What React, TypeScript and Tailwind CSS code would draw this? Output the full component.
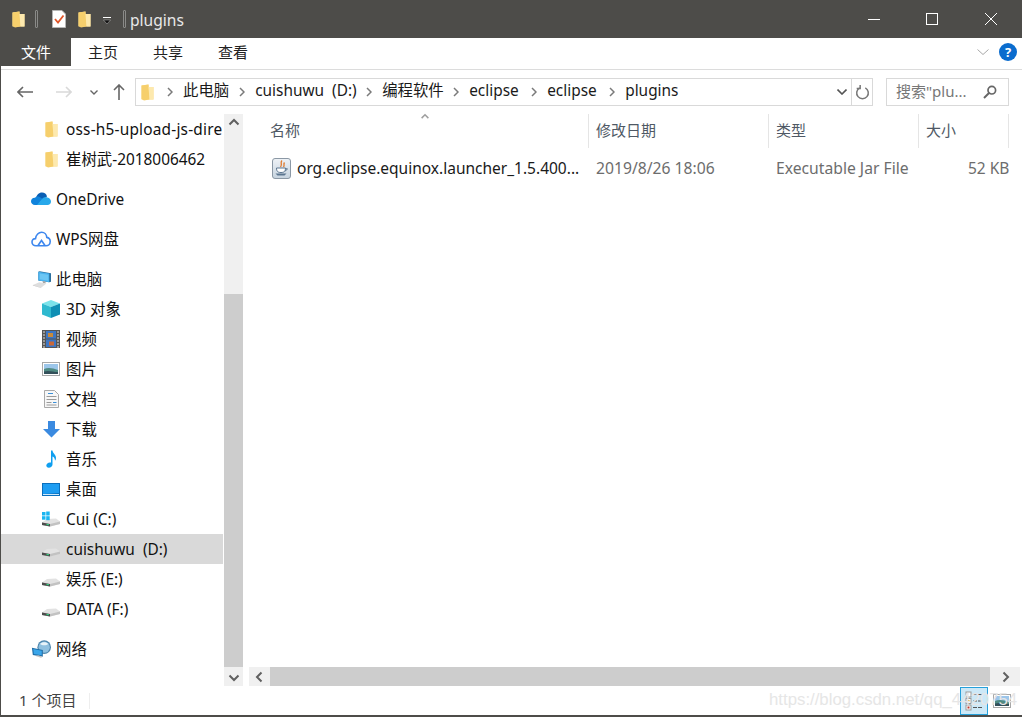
import React from "react";

const font = "font-['Noto_Sans','Noto_Sans_CJK_SC',sans-serif]";

const FolderIcon = ({ className = "" }: { className?: string }) => (
  <svg viewBox="0 0 13 17" className={`w-[13px] h-[17px] ${className}`}>
    <path d="M0.5 1.5 L7.5 0.5 L7.5 3 L12.5 3 L12.5 15.5 L0.5 15.5 Z" fill="#fbdc8c" />
    <path d="M0.5 1.5 L7.5 0.5 L8.5 15.5 L3 16.5 L0.5 15 Z" fill="#f6cf6c" />
    <path d="M7.5 3 L12.5 3 L12.5 15.5 L8.5 15.5 Z" fill="#fde9ae" />
  </svg>
);

const DriveIcon = ({ win = false }: { win?: boolean }) => (
  <svg viewBox="0 0 20 20" className="w-5 h-5">
    <path d="M1 13.5 L6 10 L15 9.5 L19 12.5 L19 15 L9 17.5 L1 16 Z" fill="#e2e2e2" />
    <path d="M1 13.5 L9 15 L19 12.5 L19 15 L9 17.5 L1 16 Z" fill="#c2c2c2" />
    <path d="M1 13.5 L9 15 L9 17.5 L1 16 Z" fill="#4c4c4c" />
    <rect x="5.5" y="15" width="2.4" height="1.2" fill="#35d07f" />
    {win && (
      <g fill="#19b5f1">
        <rect x="1" y="3" width="3.5" height="3.5" />
        <rect x="5.2" y="2.5" width="3.5" height="4" />
        <rect x="1" y="7.2" width="3.5" height="3.5" />
        <rect x="5.2" y="7.2" width="3.5" height="4" />
      </g>
    )}
  </svg>
);

const OneDriveIcon = () => (
  <svg viewBox="0 0 20 14" className="w-5 h-[14px]">
    <path d="M5 7 C5 3 8 0.5 11 0.5 C13.5 0.5 15.5 2 16 4.5 L9 9 Z" fill="#0a5fb4" />
    <path d="M4 13 C1.5 13 0 11.3 0 9.3 C0 7.2 1.7 5.6 4 5.8 C5 4.6 7 4.2 8.6 5 L12 7 L7 13 Z" fill="#1083dc" />
    <path d="M6 13 L11 7 C12.5 5 15 4.3 16.5 5.5 C18.5 6 20 7.5 20 9.6 C20 11.6 18.5 13 16.5 13 Z" fill="#28a8ea" />
  </svg>
);

const CloudIcon = () => (
  <svg viewBox="0 0 20 16" className="w-5 h-4" fill="none" stroke="#3d87ee" strokeWidth="1.6">
    <path d="M5 14.8 C2.5 14.8 1 13 1 11 C1 8.8 2.7 7.5 4.5 7.6 C5 4 7.7 1.2 10.6 1.2 C13.6 1.2 15.6 3.6 15.8 6.4 C17.8 6.8 19.2 8.4 19.2 10.5 C19.2 13 17.3 14.8 15 14.8 Z" />
    <path d="M7 14.5 L10.5 9.5 L14 14.5" />
  </svg>
);

const PcIcon = () => (
  <svg viewBox="0 0 21 19" className="w-[21px] h-[19px] ml-px">
    <path d="M7 1 L8.5 0.5 L21 2.5 L21 12 L19 12.5 L7 10.5 Z" fill="#2b6f9e" />
    <path d="M7 1 L19 3 L19 12.5 L7 10.5 Z" fill="#4ab2ee" />
    <path d="M8.5 2.8 L18 4.3 L18 11 L8.5 9.3 Z" fill="#6cc6f4" />
    <path d="M12 11.2 L15 11.8 L15 14 L12 13.5 Z" fill="#a6a6a6" />
    <path d="M1 15.5 L8 12.5 L16 14 L10 18.5 Z" fill="#dedede" />
    <path d="M1 15.5 L10 18.5 L10 19 L1 16.2 Z" fill="#b5b5b5" />
  </svg>
);

const CubeIcon = () => (
  <svg viewBox="0 0 18 18" className="w-[18px] h-[18px]">
    <path d="M9 0 L18 3.5 L9 7 L0 3.5 Z" fill="#7be3ea" />
    <path d="M0 3.5 L9 7 L9 18 L0 14.5 Z" fill="#2fb9cf" />
    <path d="M18 3.5 L9 7 L9 18 L18 14.5 Z" fill="#0f8fb4" />
  </svg>
);

const VideoIcon = () => (
  <svg viewBox="0 0 18 18" className="w-[18px] h-[18px]">
    <rect width="18" height="18" fill="#555" />
    <rect x="4" y="1" width="10" height="7.5" fill="#3d76c4" />
    <rect x="4" y="9.5" width="10" height="7.5" fill="#3d76c4" />
    <rect x="6" y="3" width="5" height="4" fill="#c98a3a" />
    <rect x="7" y="11.5" width="5" height="4" fill="#c9683a" />
    <path d="M1 2h2M1 5h2M1 8h2M1 11h2M1 14h2M1 17h2M15 2h2M15 5h2M15 8h2M15 11h2M15 14h2M15 17h2" stroke="#ddd" strokeWidth="1" />
  </svg>
);

const PictureIcon = ({ className = "w-[18px] h-[14px]" }: { className?: string }) => (
  <svg viewBox="0 0 18 14" className={className}>
    <rect x="0.5" y="0.5" width="17" height="13" fill="#fff" stroke="#a8a8a8" />
    <rect x="2" y="2" width="14" height="10" fill="#9cc6ea" />
    <path d="M2 7 C6 5 11 6 16 8 L16 12 L2 12 Z" fill="#4f8a82" />
    <path d="M2 9.5 C7 8 11 10 16 10 L16 12 L2 12 Z" fill="#33505a" />
  </svg>
);

const DocIcon = () => (
  <svg viewBox="0 0 15 18" className="w-[15px] h-[18px]">
    <path d="M0.5 0.5 L10.5 0.5 L14.5 4.5 L14.5 17.5 L0.5 17.5 Z" fill="#f7f7f7" stroke="#a9a9a9" />
    <path d="M4 3.5h5" stroke="#3a8fd8" />
    <path d="M2.5 6.5h10M2.5 9.5h10M2.5 12.5h5M2.5 15h10" stroke="#9a9a9a" />
    <path d="M9 12.5h3.5" stroke="#3a8fd8" />
  </svg>
);

const DownloadIcon = () => (
  <svg viewBox="0 0 17 17" className="w-[17px] h-[17px]">
    <path d="M5 0 L12 0 L12 8 L17 8 L8.5 16.5 L0 8 L5 8 Z" fill="#3a8ae0" />
  </svg>
);

const MusicIcon = () => (
  <svg viewBox="0 0 11 18" className="w-[11px] h-[18px]">
    <path d="M5 0.5 L6.5 0.5 C6.8 3.5 10 4.5 10 8 C10 9 9.7 10 9 10.8 C9 8.5 8 7 6.5 6.5 L6.5 14.5 C6.5 16.3 4.8 17.8 2.8 17.8 C1.2 17.8 0.3 16.8 0.3 15.6 C0.3 13.8 2 12.4 3.8 12.4 C4.2 12.4 4.6 12.5 5 12.6 Z" fill="#0f9ff0" />
  </svg>
);

const DesktopIcon = () => (
  <svg viewBox="0 0 18 13" className="w-[18px] h-[13px]">
    <rect width="18" height="13" fill="#0a6fbd" />
    <path d="M1 1 L17 1 L17 10 L1 11 Z" fill="#1e9df2" />
    <rect x="1" y="11" width="16" height="1" fill="#cfe9fb" />
  </svg>
);

const NetworkIcon = () => (
  <svg viewBox="0 0 22 20" className="w-[22px] h-5">
    <circle cx="14.5" cy="8" r="7.5" fill="#4d86ad" />
    <circle cx="14.5" cy="8" r="6.2" fill="#8fc0df" />
    <path d="M10 4.5 C12 2 17 2 19 4.5 C17 6.5 12 6.5 10 4.5 Z" fill="#e8f3f9" />
    <path d="M1 8.5 L13 11 L13 18.5 L2 16.5 Z" fill="#1f6ea8" />
    <path d="M2.5 10 L11.8 12 L11.8 17 L3.2 15.4 Z" fill="#3aa6ea" />
    <path d="M5 17.8 L11 19.5 L13 18.5 L8 17 Z" fill="#c4c4c4" />
  </svg>
);

const JarIcon = () => (
  <svg viewBox="0 0 19 21" className="w-[19px] h-[21px]">
    <defs>
      <linearGradient id="jarBg" x1="0" y1="0" x2="0" y2="1">
        <stop offset="0" stopColor="#eef2f6" />
        <stop offset="1" stopColor="#c6d3df" />
      </linearGradient>
    </defs>
    <rect x="0.5" y="0.5" width="18" height="20" rx="2.5" fill="url(#jarBg)" stroke="#8b98a5" />
    <path d="M10 2.5 C7.5 5 11 6 8.5 9 M12.5 4.5 C11 6.5 13 7 11.5 9" stroke="#e0782a" strokeWidth="1.3" fill="none" />
    <path d="M4.5 10 L13.5 10 C13.5 13 12.5 14.5 9 14.5 C5.5 14.5 4.5 13 4.5 10 Z" fill="#fff" stroke="#5c7690" />
    <path d="M13.5 10.5 L15.5 11 L13 13.2" fill="none" stroke="#5c7690" />
    <path d="M3.5 15.5 L14.5 15.5 L12.5 17.5 L5.5 17.5 Z" fill="#5c7690" />
  </svg>
);

const Chevron = ({ dir, className = "" }: { dir: "up" | "down" | "left" | "right"; className?: string }) => {
  const d = {
    up: "M1.5 7.5 L6 3 L10.5 7.5",
    down: "M1.5 4.5 L6 9 L10.5 4.5",
    left: "M7.5 1.5 L3 6 L7.5 10.5",
    right: "M4.5 1.5 L9 6 L4.5 10.5",
  }[dir];
  return (
    <svg viewBox="0 0 12 12" className={`w-3 h-3 ${className}`} fill="none" stroke="#606060" strokeWidth="2">
      <path d={d} />
    </svg>
  );
};

const Crumb = ({ text, width = "" }: { text: string; width?: string }) => (
  <>
    <svg viewBox="0 0 6 10" className="w-[6px] h-[10px] shrink-0" fill="none" stroke="#7a7a7a" strokeWidth="1.5">
      <path d="M1 1 L5 5 L1 9" />
    </svg>
    <span className={`whitespace-pre text-[15.4px] text-[#1a1a1a] leading-none pb-[3px] ${width}`}>{text}</span>
  </>
);

const NavRow = ({
  icon,
  label,
  level = 2,
  selected = false,
  className = "",
}: {
  icon: React.ReactNode;
  label: string;
  level?: 1 | 2;
  selected?: boolean;
  className?: string;
}) => (
  <div
    className={`h-[30px] flex items-center gap-[5px] text-[15.4px] text-[#111] whitespace-pre overflow-hidden ${
      level === 1 ? "pl-[30px]" : "pl-[40px]"
    } ${selected ? "bg-[#d9d9d9]" : ""} ${className}`}
  >
    <span className="w-5 h-5 flex items-center justify-center shrink-0">{icon}</span>
    <span className="pt-px">{label}</span>
  </div>
);

const Column = ({ label, width }: { label: string; width: string }) => (
  <div className={`${width} h-[34px] pl-[7px] pb-[2px] flex items-center border-r border-[#e5e5e5] text-[15px] text-[#4f5965] shrink-0`}>
    {label}
  </div>
);

export default function App() {
  return (
    <div className={`${font} relative w-[1022px] h-[717px] flex flex-col bg-white border-l border-b-2 border-[#4d4c49] overflow-hidden`}>
      {/* title bar */}
      <div className="h-[38px] bg-[#4d4c49] flex items-center shrink-0 text-[#e8e8e8]">
        <FolderIcon className="ml-[11px]" />
        <div className="ml-[10px] w-[3px] h-[18px] border border-[#8a8a88] rounded-[1px]" />
        <svg viewBox="0 0 14 18" className="ml-[14px] w-[14px] h-[18px]">
          <path d="M0.5 0.5 L10 0.5 L13.5 4 L13.5 17.5 L0.5 17.5 Z" fill="#fff" stroke="#b5b5b5" />
          <path d="M3 9 L6 12.5 L11.5 5.5" fill="none" stroke="#e0562a" strokeWidth="1.8" />
        </svg>
        <FolderIcon className="ml-[12px]" />
        <svg viewBox="0 0 8 7" className="ml-[12px] mt-[3px] w-2 h-[7px]">
          <path d="M0 0h8v1H0z" fill="#fff" />
          <path d="M0.5 3h7L4 7z" fill="#111" stroke="#ddd" strokeWidth="0.4" />
        </svg>
        <div className="ml-[12px] w-[3px] h-[18px] border border-[#8a8a88] rounded-[1px]" />
        <span className="ml-[4px] pt-[3px] text-[15.6px] leading-none">plugins</span>
        <svg viewBox="0 0 12 1" className="ml-auto w-3 h-px">
          <rect width="12" height="1" fill="#fff" />
        </svg>
        <div className="ml-[46px] w-3 h-3 border border-white" />
        <svg viewBox="0 0 12 12" className="ml-[47px] mr-[25px] w-3 h-3" fill="none" stroke="#fff" strokeWidth="1">
          <path d="M0 0 L12 12 M12 0 L0 12" />
        </svg>
      </div>

      {/* ribbon tabs */}
      <div className="h-[32px] flex border-b border-[#dcdcdc] shrink-0 text-[15px] text-[#222]">
        <div className="w-[70px] h-[28px] bg-[#4d4c49] text-white flex items-center justify-center">文件</div>
        <div className="h-[28px] flex items-center gap-[35px] pl-[17px]">
          <span>主页</span>
          <span>共享</span>
          <span>查看</span>
        </div>
        <div className="ml-auto h-[28px] flex items-center gap-[10px] pr-[5px]">
          <svg viewBox="0 0 12 6" className="w-3 h-[6px]" fill="none" stroke="#a8a8a8">
            <path d="M0.5 0.5 L6 5.5 L11.5 0.5" />
          </svg>
          <div className="w-[18px] h-[18px] rounded-full bg-[#0a6cce] text-white text-[13px] font-bold flex items-center justify-center leading-none">?</div>
        </div>
      </div>

      {/* nav toolbar */}
      <div className="h-[44px] flex items-center shrink-0">
        <svg viewBox="0 0 16 12" className="ml-[16px] w-4 h-3" fill="none" stroke="#666" strokeWidth="1.6">
          <path d="M16 6 L1 6 M6 1 L1 6 L6 11" />
        </svg>
        <svg viewBox="0 0 16 12" className="ml-[23px] w-4 h-3" fill="none" stroke="#d9d9d9" strokeWidth="1.6">
          <path d="M0 6 L15 6 M10 1 L15 6 L10 11" />
        </svg>
        <svg viewBox="0 0 8 5" className="ml-[18px] w-2 h-[5px]" fill="none" stroke="#666" strokeWidth="1.4">
          <path d="M0.5 0.5 L4 4 L7.5 0.5" />
        </svg>
        <svg viewBox="0 0 12 16" className="ml-[15px] w-3 h-4" fill="none" stroke="#666" strokeWidth="1.6">
          <path d="M6 16 L6 1 M1 6 L6 1 L11 6" />
        </svg>
        <div className="ml-[10px] w-[738px] h-[28px] border border-[#d9d9d9] flex items-center shrink-0">
          <FolderIcon className="ml-[5px]" />
          <div className="ml-[13px] flex items-center gap-[10px] flex-1">
            <Crumb text="此电脑" />
            <Crumb text="cuishuwu  (D:)" width="w-[101px]" />
            <Crumb text="编程软件" width="w-[61px]" />
            <Crumb text="eclipse" width="w-[52px]" />
            <Crumb text="eclipse" width="w-[52px]" />
            <Crumb text="plugins" />
          </div>
          <svg viewBox="0 0 10 6" className="w-[10px] h-[6px]" fill="none" stroke="#555" strokeWidth="1.6">
            <path d="M0.5 0.5 L5 5 L9.5 0.5" />
          </svg>
          <div className="ml-[4px] w-[21px] h-full border-l border-[#d9d9d9] flex items-center justify-center">
            <svg viewBox="0 0 16 16" className="w-[15px] h-[15px]" fill="none" stroke="#777" strokeWidth="1.6">
              <path d="M5 3 A6.2 6.2 0 1 0 11 3" />
              <path d="M5.5 0 L5.5 3.8 L1.8 3.8" />
            </svg>
          </div>
        </div>
        <div className="ml-[13px] w-[123px] h-[28px] border border-[#d9d9d9] flex items-center justify-between pl-[9px] pr-[11px] text-[15px] text-[#777] shrink-0">
          <span className="pb-[2px]">搜索"plu...</span>
          <svg viewBox="0 0 14 14" className="w-[14px] h-[14px]" fill="none" stroke="#666" strokeWidth="1.7">
            <circle cx="8.8" cy="5.2" r="3.8" />
            <path d="M6 8 L1 13" strokeWidth="2" />
          </svg>
        </div>
      </div>

      {/* main */}
      <div className="flex-1 flex min-h-0">
        <div className="w-[222px] shrink-0 overflow-hidden">
          <NavRow icon={<FolderIcon />} label="oss-h5-upload-js-dire" className="tracking-[0.2px]" />
          <NavRow icon={<FolderIcon />} label="崔树武-2018006462" className="mb-[10px]" />
          <NavRow level={1} icon={<OneDriveIcon />} label="OneDrive" className="mb-[10px]" />
          <NavRow level={1} icon={<CloudIcon />} label="WPS网盘" className="mb-[10px]" />
          <NavRow level={1} icon={<PcIcon />} label="此电脑" />
          <NavRow icon={<CubeIcon />} label="3D 对象" />
          <NavRow icon={<VideoIcon />} label="视频" />
          <NavRow icon={<PictureIcon />} label="图片" />
          <NavRow icon={<DocIcon />} label="文档" />
          <NavRow icon={<DownloadIcon />} label="下载" />
          <NavRow icon={<MusicIcon />} label="音乐" />
          <NavRow icon={<DesktopIcon />} label="桌面" />
          <NavRow icon={<DriveIcon win />} label="Cui (C:)" />
          <NavRow icon={<DriveIcon />} label="cuishuwu  (D:)" selected />
          <NavRow icon={<DriveIcon />} label="娱乐 (E:)" />
          <NavRow icon={<DriveIcon />} label="DATA (F:)" className="mb-[10px]" />
          <NavRow level={1} icon={<NetworkIcon />} label="网络" />
        </div>

        {/* nav scrollbar */}
        <div className="w-[19px] ml-px shrink-0 bg-[#f0f0f0] flex flex-col">
          <div className="h-[18px] flex items-center justify-center">
            <Chevron dir="up" />
          </div>
          <div className="h-[162px]" />
          <div className="h-[373px] bg-[#cdcdcd]" />
          <div className="flex-1 flex items-center justify-center">
            <Chevron dir="down" />
          </div>
        </div>

        {/* file list */}
        <div className="flex-1 min-w-0 flex flex-col pl-[6px] relative">
          <Chevron dir="up" className="absolute left-[176px] top-[-3px] scale-75 opacity-60" />
          <div className="flex pl-[14px]">
            <Column label="名称" width="w-[326px]" />
            <Column label="修改日期" width="w-[180px]" />
            <Column label="类型" width="w-[150px]" />
            <Column label="大小" width="w-[90px]" />
          </div>
          <div className="mt-[7px] h-[26px] flex items-center pl-[23px]">
            <JarIcon />
            <span className="ml-[6px] w-[282px] pt-px text-[15.5px] text-[#1a1a1a] whitespace-nowrap">org.eclipse.equinox.launcher_1.5.400...</span>
            <span className="ml-[17px] w-[180px] pt-px text-[15.7px] text-[#6d6d6d]">2019/8/26 18:06</span>
            <span className="w-[192px] pt-px text-[15.7px] text-[#6d6d6d]">Executable Jar File</span>
            <span className="pt-px text-[15.5px] text-[#6d6d6d]">52 KB</span>
          </div>
          <div className="flex-1" />
          <div className="h-[19px] flex bg-[#f0f0f0] mr-[2px]">
            <div className="w-[21px] flex items-center justify-center">
              <Chevron dir="left" />
            </div>
            <div className="w-[720px] bg-[#cdcdcd]" />
            <div className="flex-1 flex items-center justify-center">
              <Chevron dir="right" />
            </div>
          </div>
        </div>
      </div>

      {/* status bar */}
      <div className="h-[29px] shrink-0 flex items-center text-[15px] text-[#444] relative">
        <span className="ml-[18px]">1 个项目</span>
        <div className="ml-[13px] w-px h-[16px] bg-[#eeeeee]" />
        <div className="ml-auto flex items-center h-full mr-[11px]">
          <div className="w-[28px] h-[28px] bg-[#cce8f7] border border-[#26a0da] flex flex-col items-center justify-center gap-[1px]">
            <svg viewBox="0 0 18 20" className="w-[18px] h-5">
              <rect x="1" y="1" width="5" height="5" fill="#fff" stroke="#999" />
              <rect x="1" y="7.5" width="5" height="5" fill="#fff" stroke="#999" />
              <rect x="1" y="14" width="5" height="5" fill="#fff" stroke="#999" />
              <rect x="2.5" y="9" width="2" height="2" fill="#e2a03a" />
              <rect x="2.5" y="15.5" width="2" height="2" fill="#c0392b" />
              <path d="M8 3.5h4M13 3.5h4M8 10h4M13 10h4M8 16.5h4M13 16.5h4" stroke="#555" />
            </svg>
          </div>
          <PictureIcon className="ml-[5px] w-[18px] h-[14px]" />
        </div>
        <span className="absolute left-[768px] top-[1px] text-[16.8px] text-[#e6e6e6] whitespace-nowrap font-['Liberation_Sans',sans-serif]">https://blog.csdn.net/qq_4420754</span>
      </div>
    </div>
  );
}
